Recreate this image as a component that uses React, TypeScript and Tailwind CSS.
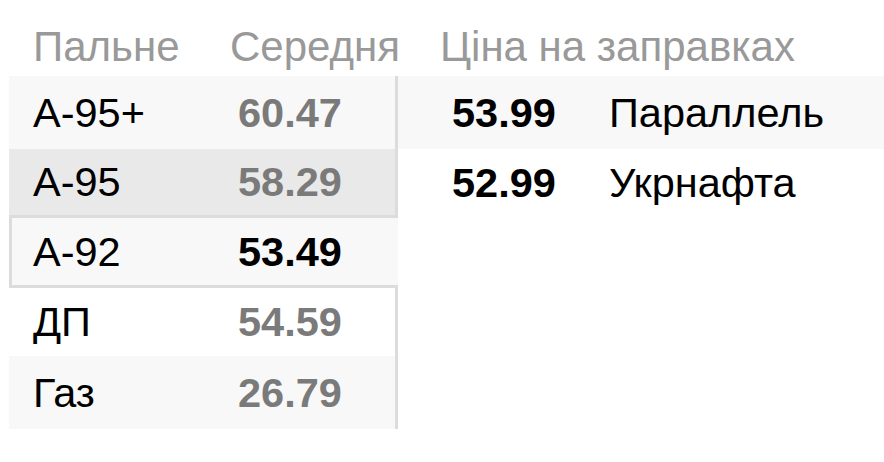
import React from 'react';

type Fuel = {
  name: string;
  avg: string;
  h: string;
  bg: string;
  selected?: boolean;
};

const fuels: Fuel[] = [
  { name: 'А-95+', avg: '60.47', h: 'h-[73px]', bg: 'bg-[#f8f8f8]' },
  { name: 'А-95', avg: '58.29', h: 'h-[66px]', bg: 'bg-[#e9e9e9]' },
  { name: 'А-92', avg: '53.49', h: 'h-[73px]', bg: 'bg-[#f8f8f8]', selected: true },
  { name: 'ДП', avg: '54.59', h: 'h-[68px]', bg: 'bg-white' },
  { name: 'Газ', avg: '26.79', h: 'h-[73px]', bg: 'bg-[#f8f8f8]' },
];

// prices for the selected fuel
const stations = [
  { price: '53.99', name: 'Параллель', bg: 'bg-[#f8f8f8]', h: 'h-[73px]' },
  { price: '52.99', name: 'Укрнафта', bg: 'bg-white', h: 'h-[67px]' },
];

export default function App() {
  return (
    <div className="w-[884px] h-[462px] bg-white pl-[9px] font-['Liberation_Sans',Arial,sans-serif] text-[41.5px] leading-none">
      {/* Header */}
      <div className="flex h-[76px] items-center pt-[18px] text-[#999999] text-[42px]">
        <div className="w-[221px] pl-[24px]">Пальне</div>
        <div className="w-[210px]">Середня</div>
        <div>Ціна на заправках</div>
      </div>

      <div className="flex">
        {/* Fuel list */}
        <div className="w-[389px] flex flex-col">
          {fuels.map((f) =>
            f.selected ? (
              <div
                key={f.name}
                className={`${f.h} ${f.bg} flex items-center border-[3px] border-r-0 border-[#dcdcdc] pl-[21px]`}
              >
                <div className="w-[205px] text-black">{f.name}</div>
                <div className="font-bold text-black">{f.avg}</div>
              </div>
            ) : (
              <div
                key={f.name}
                className={`${f.h} ${f.bg} flex items-center border-r-[3px] border-[#dcdcdc] pl-[24px]`}
              >
                <div className="w-[205px] text-black">{f.name}</div>
                <div className="font-bold text-[#7a7a7a]">{f.avg}</div>
              </div>
            )
          )}
        </div>

        {/* Stations */}
        <div className="flex-1 flex flex-col">
          {stations.map((s) => (
            <div key={s.name} className={`${s.h} ${s.bg} flex items-center pl-[54px]`}>
              <div className="w-[157px] font-bold text-black">{s.price}</div>
              <div className="text-black">{s.name}</div>
            </div>
          ))}
        </div>
      </div>
    </div>
  );
}
